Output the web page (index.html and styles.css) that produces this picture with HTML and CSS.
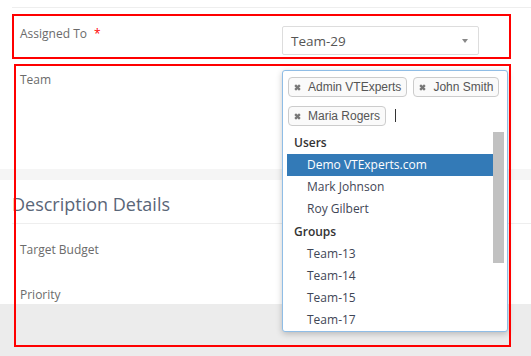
FILE: index.html
```html
<!DOCTYPE html>
<html lang="en">
<head>
    <meta charset="UTF-8">
    <meta name="viewport" content="width=device-width, initial-scale=1.0">
    <title>Edit Project</title>
    <link rel="stylesheet" href="styles.css">
</head>
<body>
    <div class="block">
        <div class="rule"></div>
        <div class="row row-assigned">
            <div class="label">Assigned To <span class="req">*</span></div>
            <div class="select">
                <span>Team-29</span>
                <span class="caret"></span>
            </div>
        </div>
        <div class="row row-team">
            <div class="label">Team</div>
        </div>
    </div>

    <div class="band"></div>

    <div class="block">
        <h3 class="section-title">Description Details</h3>
        <div class="section-body">
            <div class="row row-plain">
                <div class="label">Target Budget</div>
            </div>
            <div class="row row-plain">
                <div class="label">Priority</div>
            </div>
        </div>
    </div>

    <div class="footer-band"></div>

    <div class="picker">
        <div class="tags">
            <span class="tag"><svg class="x" viewBox="0 0 6 6"><path d="M1 1L5 5M5 1L1 5"/></svg>Admin VTExperts</span>
            <span class="tag"><svg class="x" viewBox="0 0 6 6"><path d="M1 1L5 5M5 1L1 5"/></svg>John Smith</span>
            <span class="tag"><svg class="x" viewBox="0 0 6 6"><path d="M1 1L5 5M5 1L1 5"/></svg>Maria Rogers</span>
            <span class="cursor"></span>
        </div>
        <div class="results">
            <ul class="options">
                <li class="group first">Users</li>
                <li class="option active">Demo VTExperts.com</li>
                <li class="option">Mark Johnson</li>
                <li class="option">Roy Gilbert</li>
                <li class="group">Groups</li>
                <li class="option">Team-13</li>
                <li class="option">Team-14</li>
                <li class="option">Team-15</li>
                <li class="option">Team-17</li>
            </ul>
            <div class="scrollbar"><div class="thumb"></div></div>
        </div>
    </div>

    <div class="mark mark-assigned"></div>
    <div class="mark mark-team"></div>
</body>
</html>
```

FILE: styles.css
```css
body {
    margin: 0;
    background: white;
    font-family: 'Open Sans', 'Liberation Sans', sans-serif;
    font-size: 12px;
    color: #6b6b6b;
    overflow: hidden;
}
.block {
    padding-left: 12px;
}
.rule {
    margin-top: 7px;
    border-top: 1px solid #eeeeee;
}
.row {
    display: flex;
    align-items: flex-start;
    padding-left: 8px;
}
.label {
    width: 262px;
    line-height: 18px;
}
.req {
    color: #f00;
    margin-left: 4px;
}
.row-assigned {
    padding-top: 18px;
    height: 32px;
}
.row-assigned .label {
    line-height: 16px;
}
.select {
    box-sizing: border-box;
    width: 197px;
    height: 29px;
    border: 1px solid #dddddd;
    border-radius: 2px;
    display: flex;
    align-items: center;
    justify-content: space-between;
    padding: 0 8px 0 8px;
    font-size: 13.5px;
    color: #555;
}
.caret {
    width: 0;
    height: 0;
    border-left: 3px solid transparent;
    border-right: 3px solid transparent;
    border-top: 4px solid #888;
    margin-right: 2px;
}
.row-team {
    padding-top: 13px;
    height: 98px;
}
.band {
    height: 11px;
    background: #f5f5f5;
}
.section-title {
    margin: 0;
    padding-top: 6px;
    line-height: 37px;
    font-size: 18px;
    font-weight: normal;
    color: #5a6678;
    border-bottom: 1px solid #eeeeee;
}
.section-body {
    height: 80px;
    overflow: hidden;
}
.row-plain {
    height: 28px;
    padding-top: 17px;
}
.footer-band {
    height: 60px;
    background: #ececec;
}

.picker {
    position: absolute;
    left: 282px;
    top: 70px;
    width: 226px;
    height: 262px;
    box-sizing: border-box;
    background: white;
    border: 1px solid #8fbde6;
    border-radius: 3px;
    box-shadow: 0 2px 6px rgba(0, 0, 0, 0.22);
    display: flex;
    flex-direction: column;
}
.tags {
    height: 61px;
    flex: none;
    box-sizing: border-box;
    padding: 6px 5px 0;
    display: flex;
    flex-wrap: wrap;
    align-content: flex-start;
    gap: 9px 6px;
}
.tag {
    box-sizing: border-box;
    height: 20px;
    display: flex;
    align-items: center;
    gap: 7px;
    padding: 0 5px 0 5px;
    border: 1px solid #cccccc;
    border-radius: 4px;
    background: #fafafa;
    font-family: 'Liberation Sans', Arial, sans-serif;
    font-size: 12px;
    color: #555;
}
.x {
    width: 7px;
    height: 7px;
    stroke: #777;
    stroke-width: 2;
    fill: none;
}
.cursor {
    width: 1px;
    height: 13px;
    margin: 3px 0 0 3px;
    background: #333;
}
.results {
    flex: 1;
    display: flex;
    margin: 0 3px 0 4px;
    overflow: hidden;
}
.options {
    flex: 1;
    list-style: none;
    margin: 0;
    padding: 0;
}
.options li {
    line-height: 22.2px;
    white-space: nowrap;
}
.options li.first {
    line-height: 22px;
}
.group {
    padding-left: 7px;
    color: #333;
    font-weight: 600;
}
.option {
    padding-left: 20px;
    color: #3f4656;
}
.option.active {
    background: #337ab7;
    color: white;
}
.scrollbar {
    width: 11px;
}
.thumb {
    height: 131px;
    background: #c1c1c1;
}

.mark {
    position: absolute;
    box-sizing: border-box;
    border: 2px solid #ff0000;
}
.mark-assigned {
    left: 12px;
    top: 14px;
    width: 499px;
    height: 45px;
}
.mark-team {
    left: 14px;
    top: 64px;
    width: 497px;
    height: 283px;
}
```
